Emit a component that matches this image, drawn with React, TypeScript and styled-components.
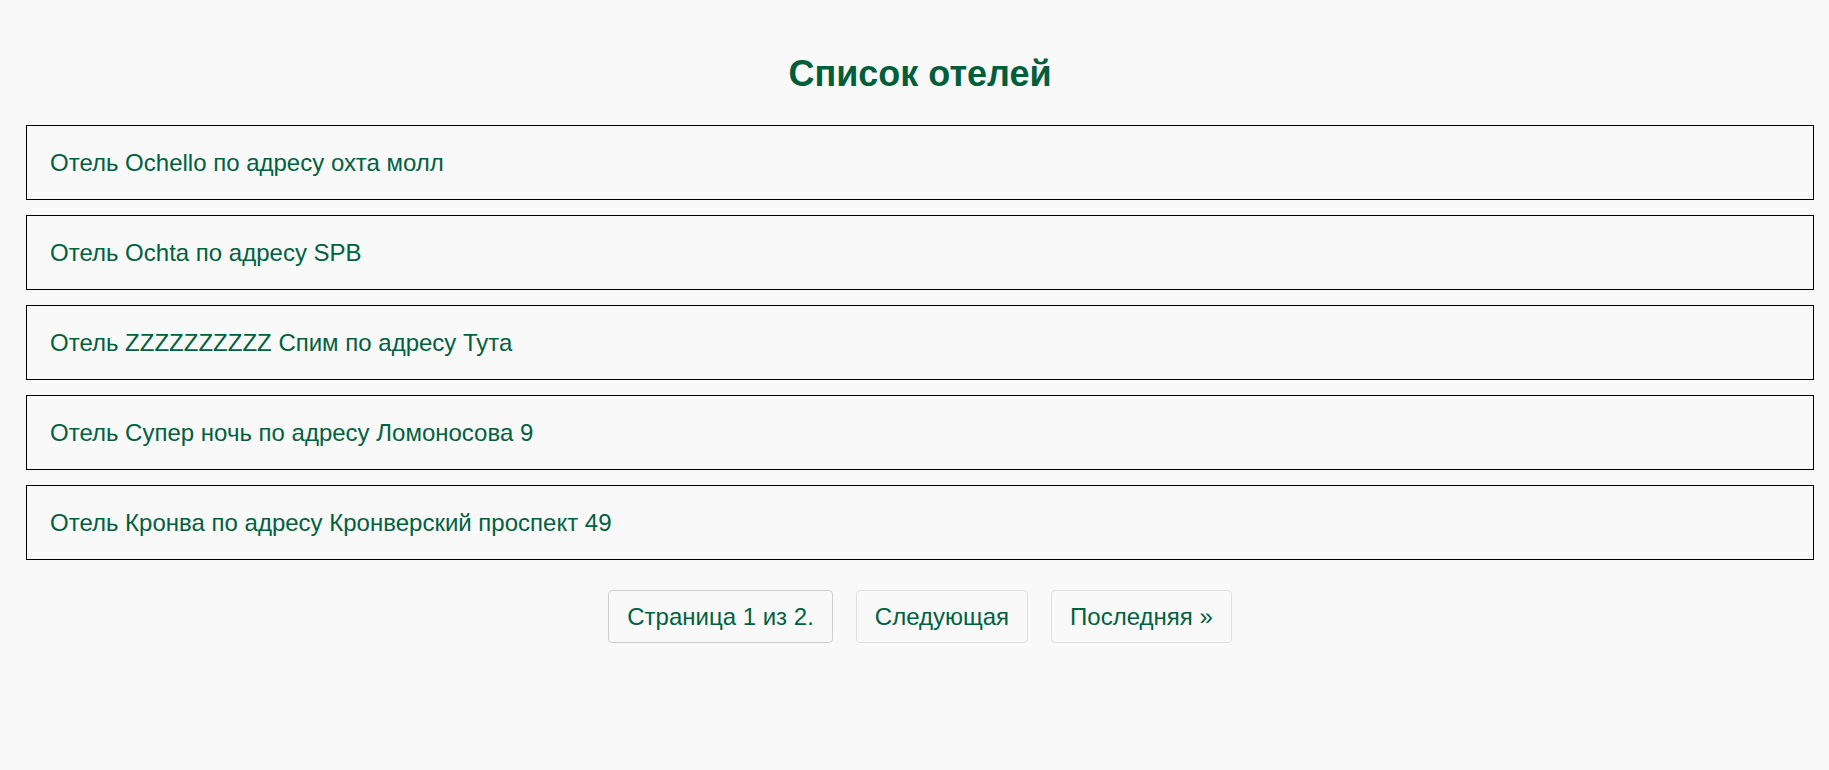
import React from "react";
import styled, { createGlobalStyle } from "styled-components";

const GlobalStyle = createGlobalStyle`
  html, body {
    margin: 0;
    padding: 0;
    background: #f9f9f9;
  }
  body {
    font-family: "Liberation Sans", Arial, Helvetica, sans-serif;
  }
`;

const Page = styled.div`
  padding: 53px 15px 40px 26px;
  display: flex;
  flex-direction: column;
  color: #00613f;
`;

const Title = styled.h1`
  margin: 0 0 31px;
  text-align: center;
  font-size: 36px;
  font-weight: 700;
  line-height: 41px;
  color: #005e3b;
`;

const HotelList = styled.ul`
  list-style: none;
  margin: 0;
  padding: 0;
  display: flex;
  flex-direction: column;
  gap: 15px;
`;

const HotelItem = styled.li`
  border: 1px solid #000;
  padding: 22px 23px;
  font-size: 24px;
  line-height: 29px;
  color: #00613f;
`;

const Pagination = styled.nav`
  margin-top: 30px;
  display: flex;
  justify-content: center;
  gap: 23px;
`;

const PageButton = styled.span<{ $current?: boolean }>`
  display: inline-block;
  padding: 12px 18px;
  font-size: 24px;
  line-height: 27px;
  color: #00613f;
  background: #f9f9f9;
  border: 1px solid ${(p) => (p.$current ? "#cfcfcf" : "#dedede")};
  border-radius: 4px;
  cursor: ${(p) => (p.$current ? "default" : "pointer")};
`;

const hotels = [
  "Отель Ochello по адресу охта молл",
  "Отель Ochta по адресу SPB",
  "Отель ZZZZZZZZZZ Спим по адресу Тута",
  "Отель Супер ночь по адресу Ломоносова 9",
  "Отель Кронва по адресу Кронверский проспект 49",
];

export default function App() {
  return (
    <>
      <GlobalStyle />
      <Page>
        <Title>Список отелей</Title>
        <HotelList>
          {hotels.map((h) => (
            <HotelItem key={h}>{h}</HotelItem>
          ))}
        </HotelList>
        <Pagination>
          <PageButton $current>Страница 1 из 2.</PageButton>
          <PageButton>Следующая</PageButton>
          <PageButton>Последняя »</PageButton>
        </Pagination>
      </Page>
    </>
  );
}
